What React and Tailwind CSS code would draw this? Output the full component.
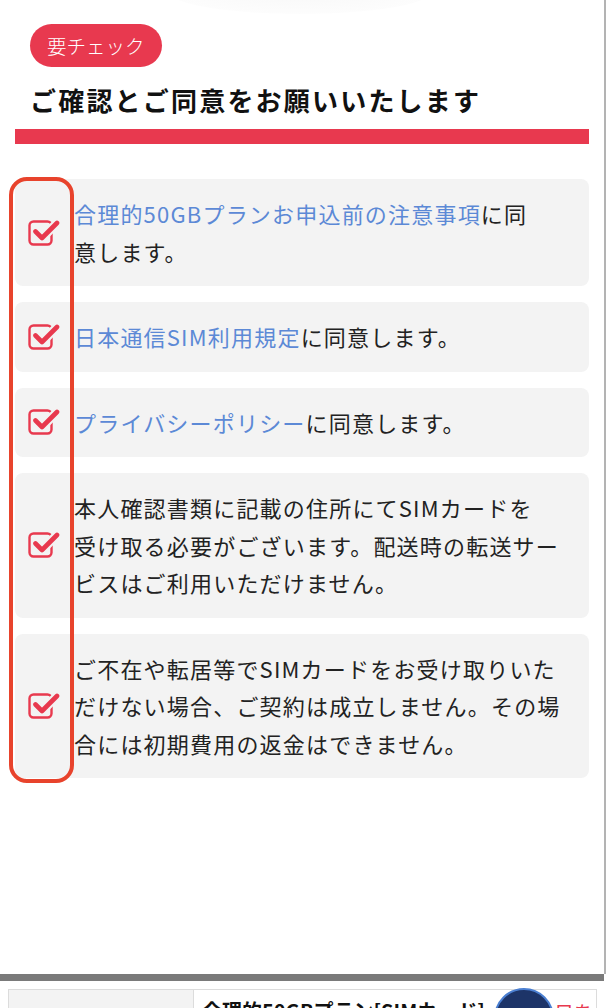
const FONT = { fontFamily: '"Noto Sans CJK JP", "Noto Sans", sans-serif' };

/**
 * Checked box icon: outlined rounded square with a bold check breaking out of the corner
 */
const CheckIcon = () => (
  <svg width="32" height="28" viewBox="0 0 32 28" className="shrink-0">
    <rect x="1.5" y="2.5" width="22" height="23" rx="4" fill="none" stroke="#e8394e" strokeWidth="2.4" />
    <path d="M7.5 12.5 L14 19 L29 4" fill="none" stroke="#f3f3f3" strokeWidth="9" strokeLinecap="round" strokeLinejoin="round" />
    <path d="M7.5 12.5 L14 19 L29 4" fill="none" stroke="#e8394e" strokeWidth="4.6" strokeLinecap="round" strokeLinejoin="round" />
  </svg>
);

const Link = ({ children }) => <span className="text-[#5c89d6]">{children}</span>;

const items = [
  <>
    <Link>合理的50GBプランお申込前の注意事項</Link>に同<br />意します。
  </>,
  <>
    <Link>日本通信SIM利用規定</Link>に同意します。
  </>,
  <>
    <Link>プライバシーポリシー</Link>に同意します。
  </>,
  <>
    本人確認書類に記載の住所にてSIMカードを<br />受け取る必要がございます。配送時の転送サー<br />ビスはご利用いただけません。
  </>,
  <>
    ご不在や転居等でSIMカードをお受け取りいた<br />だけない場合、ご契約は成立しません。その場<br />合には初期費用の返金はできません。
  </>,
];

export default function App() {
  return (
    <div className="h-[1008px] w-[610px] overflow-hidden bg-white" style={FONT}>
      <div className="relative w-[606px] border-r-2 border-[#b3b3b3]">
        {/* faint shadow of the element above */}
        <div className="absolute left-[170px] top-[-30px] h-[44px] w-[260px] rounded-[50%] bg-[radial-gradient(ellipse_at_center,#f8f8f8_0%,#fcfcfc_60%,#ffffff_100%)]"></div>

        <div className="relative pt-[24px]">
          <div className="ml-[30px] inline-flex h-[43px] items-center rounded-full bg-[#e8394f] px-[17px] text-[19.5px] font-light text-white">
            要チェック
          </div>
        </div>

        <h1 className="mt-[13px] ml-[30px] text-[26px] font-bold leading-[40px] tracking-[2.2px] text-[#111]">
          ご確認とご同意をお願いいたします
        </h1>

        <div className="mx-[15px] mt-[9px] h-[15px] bg-[#e8394f]"></div>

        <div className="relative mx-[15px] mt-[35px] flex flex-col gap-4">
          {items.map((content, i) => (
            <div key={i} className="flex items-center rounded-lg bg-[#f3f3f3] py-4 pl-[13px] pr-2">
              <CheckIcon />
              <p className="ml-[14px] whitespace-nowrap text-[22px] leading-[37.5px] tracking-[1.2px] text-[#222]">
                {content}
              </p>
            </div>
          ))}
          {/* annotation outline around the checkbox column */}
          <div className="pointer-events-none absolute left-[-6px] top-[-2px] h-[606px] w-[65px] rounded-[18px] border-4 border-[#e8432c]"></div>
        </div>

        <div className="h-[196px]"></div>
      </div>

      <div className="h-[7px] w-[604px] bg-[#7a7a7a]"></div>

      <div className="relative ml-[8px] mt-[8px] flex w-[589px] border border-[#dcdcdc]">
        <div className="h-[80px] w-[185px] border-r border-[#dcdcdc] bg-[#f3f3f3]"></div>
        <div className="flex-1 px-2 pt-[6px] text-[20px] font-bold text-[#111]">
          合理的50GBプラン[SIMカード]
        </div>
        <div className="absolute right-[2px] top-[8px] text-[20px] text-[#e8394f]">日を</div>
        <div className="absolute left-[485px] top-[-2px] h-[60px] w-[60px] rounded-full border-2 border-[#4b7fd1] bg-[#1d3468]"></div>
      </div>
    </div>
  );
}
